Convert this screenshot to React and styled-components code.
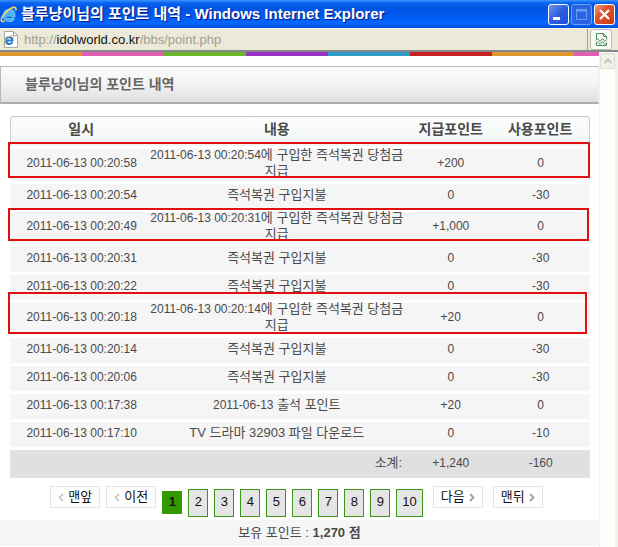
import React from 'react';
import styled, { createGlobalStyle } from 'styled-components';

const GlobalStyle = createGlobalStyle`
  *, *::before, *::after {
    box-sizing: border-box;
  }
  body {
    margin: 0;
    background-color: #ffffff;
    color: #4a4a4a;
    font-family: "Liberation Sans", "Noto Sans CJK KR", sans-serif;
    font-size: 13px;
    line-height: 16px;
  }
  button {
    font: inherit;
    padding: 0;
    cursor: pointer;
  }
`;

const Window = styled.div`
  display: flex;
  flex-direction: column;
  min-height: 100vh;
`;

const TitleBar = styled.header`
  display: flex;
  align-items: center;
  height: 28px;
  padding-right: 3px;
  background: linear-gradient(#3a94ff 0, #0a63f0 3px, #0054e3 8px, #0058ec 15px, #0668ff 23px, #0050d8 28px);
`;

const WindowTitle = styled.h1`
  flex: 1;
  margin: 0 0 0 4px;
  overflow: hidden;
  color: white;
  font-size: 15px;
  font-weight: bold;
  line-height: 20px;
  white-space: nowrap;
  text-shadow: 1px 1px 1px #0a1883;
`;

const WindowButtons = styled.div`
  display: flex;
  gap: 2px;
`;

const WindowButton = styled.button`
  display: flex;
  width: 21px;
  height: 21px;
  border: 1px solid ${({ $faded }) => ($faded ? '#6f9cf5' : '#ffffff')};
  border-radius: 3px;
  background: ${({ $close, $faded }) => {
    if ($close) return 'linear-gradient(135deg, #f0a088, #e0502c 40%, #c83c14)';
    if ($faded) return '#2a63e4';
    return 'linear-gradient(135deg, #6f96f0, #2c5ce0 50%, #1e50dc)';
  }};
`;

const AddressBar = styled.div`
  display: flex;
  align-items: center;
  height: 24px;
  padding: 0 6px 0 3px;
  border-top: 1px solid #f8f6ec;
  border-bottom: 2px solid #858a88;
  background-color: #ece9d8;
`;

const Address = styled.div`
  flex: 1;
  margin-left: 6px;
  color: #a09e94;
  white-space: nowrap;
`;

const Domain = styled.span`
  color: #111111;
`;

const CompatButton = styled.button`
  display: flex;
  justify-content: center;
  align-items: center;
  width: 22px;
  height: 21px;
  border: 1px solid #b9bcb4;
  border-radius: 3px;
  background-color: #fbfaf5;
`;

const Divider = styled.span`
  width: 1px;
  height: 21px;
  margin-right: 2px;
  background-color: #97a09f;
`;

const Viewport = styled.div`
  display: flex;
  flex: 1;
`;

const Page = styled.main`
  flex: 1;
  min-width: 0;
  border-right: 1px solid #f1f1f1;
`;

const ScrollTrack = styled.div`
  width: 18px;
  padding-top: 1px;
  border-right: 3px solid #f1f1ec;
  background-color: #fefefb;
`;

const ScrollButton = styled.button`
  display: flex;
  justify-content: center;
  align-items: center;
  width: 15px;
  height: 16px;
  border: 1px solid #dddcd2;
  border-radius: 2px;
  background-color: #f1f0e9;
`;

const Stripe = styled.div`
  height: 4px;
  background: repeating-linear-gradient(
    90deg,
    #de972b 0 82px,
    #e05fb5 82px 164px,
    #6cb52d 164px 246px,
    #9b30c9 246px 328px,
    #309dc9 328px 410px,
    #c62020 410px 492px
  );
`;

const Heading = styled.h2`
  height: 38px;
  margin: 10px 0 12px;
  padding: 9px 24px 0;
  border: 1px solid #b8b8b8;
  border-right-color: #eeeeee;
  border-bottom: 2px solid #adadad;
  background: linear-gradient(#fbfbfb, #f3f3f3 50%, #dfdfdf);
  color: #666666;
  font-size: 14px;
  line-height: 16px;
`;

const TableFrame = styled.div`
  padding: 0 9px 0 10px;
`;

const HeadPanel = styled.thead`
  background: linear-gradient(#fdfdfd, #f2f4f4);
`;

const PointTable = styled.table`
  width: 100%;
  border-spacing: 0;
  table-layout: fixed;
  text-align: center;
  word-break: keep-all;
`;

const Col = styled.col`
  width: ${({ $width }) => $width};
`;

const HeadCell = styled.th`
  height: 30px;
  padding: 0 0 6px ${({ $first }) => ($first ? '8px' : 0)};
  border-top: 1px solid #c4c4c4;
  border-left: ${({ $first }) => ($first ? '1px solid #cccccc' : 0)};
  border-right: ${({ $last }) => ($last ? '1px solid #cccccc' : 0)};
  border-top-left-radius: ${({ $first }) => ($first ? '3px' : 0)};
  border-top-right-radius: ${({ $last }) => ($last ? '3px' : 0)};
  font-size: 14px;
`;

const Row = styled.tr`
  position: relative;
`;

const Cell = styled.td`
  height: ${({ $tall }) => ($tall ? '35px' : '28px')};
  padding: 0 0 0 ${({ $first }) => ($first ? '10px' : 0)};
  border-top: 3px solid #ffffff;
  background-color: #f5f5f5;
`;

const CellText = styled.div`
  margin: -2px 0 2px;
`;

const Digits = styled.span`
  font-size: 12px;
`;

const TotalCell = styled.td`
  height: 31px;
  padding: 0 ${({ $label }) => ($label ? '8px' : 0)} 2px 0;
  border-top: 3px solid #ffffff;
  background-color: #e0e0e0;
  text-align: ${({ $label }) => ($label ? 'right' : 'center')};
`;

const Marker = styled.span`
  position: absolute;
  top: ${({ $top }) => $top}px;
  right: ${({ $right }) => $right}px;
  bottom: ${({ $bottom }) => $bottom}px;
  left: -2px;
  z-index: 1;
  border: 2px solid #e01010;
  pointer-events: none;
`;

const Pager = styled.nav`
  display: flex;
  justify-content: center;
  gap: 6px;
  height: 42px;
  padding: 8px 6px 0 0;
`;

const NavLink = styled.a`
  display: flex;
  flex: none;
  justify-content: center;
  align-items: center;
  gap: 4px;
  width: 50px;
  height: 22px;
  border: 1px solid #e4e4e4;
  color: #111111;
  text-decoration: none;
`;

const PageList = styled.ol`
  display: flex;
  align-items: flex-start;
  gap: 6px;
  margin: 0;
  padding: 3px 0 0;
  list-style: none;
`;

const PageLink = styled.a`
  display: block;
  min-width: 20px;
  padding: ${({ $current }) => ($current ? '3px 6px 4px' : '4px 5px 6px')};
  margin-top: ${({ $current }) => ($current ? '2px' : 0)};
  border: ${({ $current }) => ($current ? 0 : '1px solid #3c9416')};
  background-color: ${({ $current }) => ($current ? '#339900' : '#e5e5e5')};
  color: #111111;
  font-weight: ${({ $current }) => ($current ? 'bold' : 'normal')};
  text-align: center;
  text-decoration: none;
`;

const NextGroup = styled.div`
  display: flex;
  gap: 10px;
  margin-left: 4px;
`;

const Balance = styled.p`
  margin: 0;
  padding: 5px 0;
  background-color: #f5f5f5;
  text-align: center;
`;

const rows = [
  { date: '2011-06-13 00:20:58', stamp: '2011-06-13 00:20:54', text: '에 구입한 즉석복권 당첨금 지급', give: '+200', use: '0', marker: { top: -4, right: 0, bottom: 3 } },
  { date: '2011-06-13 00:20:54', text: '즉석복권 구입지불', give: '0', use: '-30' },
  { date: '2011-06-13 00:20:49', stamp: '2011-06-13 00:20:31', text: '에 구입한 즉석복권 당첨금 지급', give: '+1,000', use: '0', marker: { top: -1, right: 1, bottom: 3 } },
  { date: '2011-06-13 00:20:31', text: '즉석복권 구입지불', give: '0', use: '-30' },
  { date: '2011-06-13 00:20:22', text: '즉석복권 구입지불', give: '0', use: '-30' },
  { date: '2011-06-13 00:20:18', stamp: '2011-06-13 00:20:14', text: '에 구입한 즉석복권 당첨금 지급', give: '+20', use: '0', marker: { top: -8, right: 3, bottom: 1 } },
  { date: '2011-06-13 00:20:14', text: '즉석복권 구입지불', give: '0', use: '-30' },
  { date: '2011-06-13 00:20:06', text: '즉석복권 구입지불', give: '0', use: '-30' },
  { date: '2011-06-13 00:17:38', stamp: '2011-06-13', text: ' 출석 포인트', give: '+20', use: '0' },
  { date: '2011-06-13 00:17:10', text: 'TV 드라마 32903 파일 다운로드', give: '0', use: '-10' },
];

const pages = [1, 2, 3, 4, 5, 6, 7, 8, 9, 10];

const ExplorerLogo = ({ size }) => (
  <svg width={size} height={size} viewBox="0 0 16 16" fill="none" aria-hidden="true">
    <path d="M4.500 8.800h8.200c0-2.800-1.500-4.500-4-4.500s-4.200 1.900-4.200 4.500 1.700 4.500 4.200 4.500c1.800 0 3.100-.8 3.800-2.200" stroke="#8fd4ff" strokeWidth="3.600" />
    <path d="M4.500 8.800h8.200c0-2.800-1.500-4.500-4-4.500s-4.200 1.900-4.200 4.500 1.700 4.500 4.200 4.500c1.800 0 3.100-.8 3.800-2.200" stroke="#4db4f5" strokeWidth="2.600" />
    <path d="M6 8.800h5" stroke="#0b4cc4" strokeWidth="1" transform="translate(0 1.800)" />
    <path d="M14.600 4.400C15.400 2.600 15 1.300 13.400 1.300 9.500 1.300 1.200 9 1.200 13.200c0 1.700 1.600 1.700 3.300.8" stroke="#f6d55f" strokeWidth="1.500" />
  </svg>
);

const PageIcon = () => (
  <svg width="15" height="17" viewBox="0 0 15 17" fill="none" aria-hidden="true">
    <path d="M1.500 .5h9l4 4v12h-13z" fill="#fff" stroke="#a5a9a8" />
    <path d="M10.500 .5v4h4" stroke="#a5a9a8" />
    <path d="M3 9.500h6.500c0-2.200-1.200-3.300-3.200-3.300S3 7.500 3 9.600s1.300 3.400 3.300 3.400c1.500 0 2.500-.6 3-1.800" stroke="#2178d4" strokeWidth="2" />
    <path d="M10.500 6.500c.6-1.300.1-2-.9-2C6.500 4.500.7 10 .7 13c0 1 1 1.200 2.400.5" stroke="#e5b63c" />
  </svg>
);

const Chevron = ({ next }) => (
  <svg width="6" height="9" viewBox="0 0 6 9" fill="none" aria-hidden="true">
    <path d={next ? 'M1 1l3.500 3.500L1 8' : 'M5 1L1.500 4.500 5 8'} stroke={next ? '#a5a5a5' : '#cfcfcf'} strokeWidth="2" />
  </svg>
);

const App = () => (
  <>
    <GlobalStyle />
    <Window>
      <TitleBar>
        <ExplorerLogo size={17} />
        <WindowTitle>블루냥이님의 포인트 내역 - Windows Internet Explorer</WindowTitle>
        <WindowButtons>
          <WindowButton aria-label="최소화">
            <svg width="19" height="19" viewBox="0 0 19 19"><path d="M4 12h7v3H4z" fill="#fff" /></svg>
          </WindowButton>
          <WindowButton $faded aria-label="최대화">
            <svg width="19" height="19" viewBox="0 0 19 19" fill="none">
              <path d="M4.500 4.500h10v10h-10z" stroke="#6f9cf5" />
              <path d="M4 5.500h11" stroke="#6f9cf5" strokeWidth="2" />
            </svg>
          </WindowButton>
          <WindowButton $close aria-label="닫기">
            <svg width="19" height="19" viewBox="0 0 19 19"><path d="M5 5l9 9M14 5l-9 9" stroke="#fff" strokeWidth="2.400" /></svg>
          </WindowButton>
        </WindowButtons>
      </TitleBar>
      <AddressBar>
        <PageIcon />
        <Address>http://<Domain>idolworld.co.kr</Domain>/bbs/point.php</Address>
        <Divider />
        <CompatButton aria-label="호환성 보기">
          <svg width="13" height="15" viewBox="0 0 13 15" fill="none">
            <path d="M1.500 7V1.500h7l3 3V7M8.500 1.500v3h3M1.500 11v2.500h10V11" stroke="#4d9160" />
            <path d="M.5 8.500l2-2 2.500 3 2.500-3 2.500 3 2-2M.5 11.500l2-2 2.500 3 2.500-3 2.500 3 2-2" stroke="#4d9160" />
          </svg>
        </CompatButton>
      </AddressBar>
      <Viewport>
        <Page>
          <Stripe />
          <Heading>블루냥이님의 포인트 내역</Heading>
          <TableFrame>
            <PointTable>
              <colgroup>
                <Col $width="23%" />
                <Col $width="46%" />
                <Col $width="14%" />
                <Col $width="17%" />
              </colgroup>
              <HeadPanel>
                <tr>
                  <HeadCell $first>일시</HeadCell>
                  <HeadCell>내용</HeadCell>
                  <HeadCell>지급포인트</HeadCell>
                  <HeadCell $last>사용포인트</HeadCell>
                </tr>
              </HeadPanel>
              <tbody>
                {rows.map((row) => (
                  <Row key={row.date}>
                    <Cell $first $tall={!!row.marker}>
                      {row.marker && (
                        <Marker $top={row.marker.top} $right={row.marker.right} $bottom={row.marker.bottom} />
                      )}
                      <CellText><Digits>{row.date}</Digits></CellText>
                    </Cell>
                    <Cell>
                      <CellText>
                        {row.stamp && <Digits>{row.stamp}</Digits>}
                        {row.text}
                      </CellText>
                    </Cell>
                    <Cell><CellText><Digits>{row.give}</Digits></CellText></Cell>
                    <Cell><CellText><Digits>{row.use}</Digits></CellText></Cell>
                  </Row>
                ))}
              </tbody>
              <tfoot>
                <tr>
                  <TotalCell $label colSpan={2}>소계:</TotalCell>
                  <TotalCell><Digits>+1,240</Digits></TotalCell>
                  <TotalCell><Digits>-160</Digits></TotalCell>
                </tr>
              </tfoot>
            </PointTable>
          </TableFrame>
          <Pager aria-label="페이지">
            <NavLink href="#first"><Chevron />맨앞</NavLink>
            <NavLink href="#prev"><Chevron />이전</NavLink>
            <PageList>
              {pages.map((page) => (
                <li key={page}>
                  <PageLink href={`#page-${page}`} $current={page === 1}>{page}</PageLink>
                </li>
              ))}
            </PageList>
            <NextGroup>
              <NavLink href="#next">다음<Chevron next /></NavLink>
              <NavLink href="#last">맨뒤<Chevron next /></NavLink>
            </NextGroup>
          </Pager>
          <Balance>보유 포인트 : <b>1,270 점</b></Balance>
        </Page>
        <ScrollTrack>
          <ScrollButton aria-label="위로">
            <svg width="8" height="6" viewBox="0 0 8 6" fill="none"><path d="M.5 5L4 1.500 7.500 5" stroke="#c9c3bf" strokeWidth="2" /></svg>
          </ScrollButton>
        </ScrollTrack>
      </Viewport>
    </Window>
  </>
);

export default App;
